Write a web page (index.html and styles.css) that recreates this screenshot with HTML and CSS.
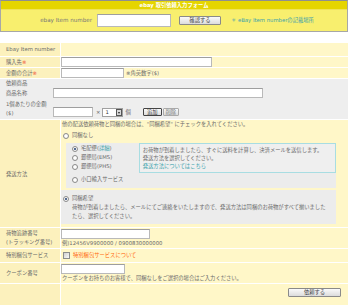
FILE: index.html
```html
<!DOCTYPE html>
<html lang="ja">
<head>
<meta charset="utf-8">
<title>ebay 取引依頼入力フォーム</title>
<link rel="stylesheet" href="styles.css">
</head>
<body>
<div class="page">
  <div class="topbox">
    <div class="title">ebay 取引依頼入力フォーム</div>
    <div class="lookup">
      <span class="lk-label">ebay Item number</span>
      <span class="inp inp-item"></span>
      <span class="btn btn-check">確認する</span>
      <span class="teal lk-link">＊ eBay Item numberの記載場所</span>
    </div>
  </div>

  <div class="form">
    <div class="lab r1">Ebay Item number</div>
    <div class="val r1"></div>

    <div class="lab r2">購入先<span class="req">※</span></div>
    <div class="val r2"><span class="inp inp-buy"></span></div>

    <div class="lab r2">金額の合計<span class="req">※</span></div>
    <div class="val r2"><span class="inp inp-sum"></span><span class="hint-inline">※角英数字($)</span></div>

    <div class="gray-sec">
      <div class="sec-title">依頼商品</div>
      <div class="g-row">
        <div class="g-lab">商品名称</div>
        <span class="inp inp-name"></span>
      </div>
      <div class="g-row g-row2">
        <div class="g-lab g-lab2">1個あたりの金額<br>($)</div>
        <div class="g-ctrl">
          <span class="inp inp-price"></span>
          <span class="times">×</span>
          <span class="select"><span class="sel-val">1</span><span class="sel-arrow"></span></span>
          <span class="unit">個</span>
          <span class="btn btn-add">追加</span>
          <span class="btn btn-del">削除</span>
        </div>
      </div>
    </div>

    <div class="lab r-ship"><span class="ship-label">発送方法</span></div>
    <div class="val-block r-ship">
      <div class="note">他の配送依頼荷物と同梱の場合は、"同梱希望" にチェックを入れてください。</div>
      <div class="opt opt-none"><span class="radio"></span>同梱なし</div>
      <div class="box-a">
        <div class="opts">
          <div class="opt"><span class="radio on"></span>宅配便(<span class="teal">詳細</span>)</div>
          <div class="opt"><span class="radio"></span>郵便局(EMS)</div>
          <div class="opt"><span class="radio"></span>郵便局(PHS)</div>
          <div class="opt opt-small"><span class="radio"></span>小口輸入サービス</div>
        </div>
        <div class="info">
          <div>お荷物が到着しましたら、すぐに送料を計算し、決済メールを送信します。</div>
          <div>発送方法を選択してください。</div>
          <div class="teal">発送方法についてはこちら</div>
        </div>
      </div>
      <div class="box-b">
        <div class="opt"><span class="radio on"></span>同梱希望</div>
        <div class="b-text">荷物が到着しましたら、メールにてご連絡をいたしますので、発送方法は同梱のお荷物がすべて揃いました<br>たら、選択してください。</div>
      </div>
    </div>

    <div class="lab r-track">荷物追跡番号<br>(トラッキング番号)</div>
    <div class="val-block r-track">
      <span class="inp inp-track"></span>
      <div class="hint">例)12456V9900000 / 0900830000000</div>
    </div>

    <div class="lab r-pack">特別梱包サービス</div>
    <div class="val r-pack"><span class="check"></span><span class="orange">特別梱包サービスについて</span></div>

    <div class="lab r-coupon">クーポン番号</div>
    <div class="val-block r-coupon">
      <span class="inp inp-coupon"></span>
      <div class="hint">クーポンをお持ちのお客様で、同梱なしをご選択の場合はご入力ください。</div>
    </div>

    <div class="lab r-last"></div>
    <div class="val r-last submit-cell"><span class="btn btn-submit">依頼する</span></div>
  </div>
</div>
</body>
</html>
```

FILE: styles.css
```css
html, body {
  margin: 0;
  padding: 0;
  background: #ffffff;
}

body {
  font-family: "DejaVu Sans", "Noto Sans CJK JP", sans-serif;
  font-size: 5.3px;
  color: #6a6a6a;
  line-height: 1.3;
}

.page {
  width: 348px;
}

/* ---------- top lookup box ---------- */
.topbox {
  border: 1px solid #a7a7a7;
  border-top-color: #8f8f8f;
}

.title {
  height: 8px;
  line-height: 8px;
  background: #e5d500;
  color: #ffffff;
  font-weight: bold;
  text-align: center;
}

.lookup {
  height: 21px;
  background: #f8ef6e;
  display: flex;
  align-items: center;
  border-top: 1px solid #efe35a;
}

.lk-label {
  width: 91px;
  text-align: right;
  font-size: 5.6px;
  color: #777;
}

.inp {
  display: inline-block;
  box-sizing: border-box;
  background: #ffffff;
  border: 1px solid #b9b9b9;
  border-top-color: #9e9e9e;
  vertical-align: middle;
}

.inp-item {
  width: 74px;
  height: 13px;
  margin-left: 5px;
}

.btn {
  display: inline-flex;
  align-items: center;
  justify-content: center;
  box-sizing: border-box;
  border: 1px solid #8a8a8a;
  border-radius: 1px;
  background: linear-gradient(#fafafa, #dcdcdc);
  color: #444;
  font-size: 5.3px;
}

.btn-check {
  width: 42px;
  height: 9px;
  margin-left: 8px;
}

.teal {
  color: #3aa2ac;
}

.lk-link {
  margin-left: 10px;
}

/* ---------- main form ---------- */
.form {
  margin-top: 11px;
  display: grid;
  grid-template-columns: 60px 1fr;
  gap: 1px;
  background: #ffffff;
}

.lab {
  background: #fcf1bd;
  padding-left: 6px;
  display: flex;
  align-items: center;
}

.val {
  background: #fff7c8;
  display: flex;
  align-items: center;
}

.val-block {
  background: #fff7c8;
}

.req {
  color: #f05a3c;
}

.r1 { height: 13px; }
.r2 { height: 10px; }

.inp-buy {
  width: 151px;
  height: 10px;
}

.inp-sum {
  width: 63px;
  height: 10px;
}

.hint-inline {
  margin-left: 2px;
}

/* gray product section */
.gray-sec {
  grid-column: 1 / -1;
  background: #eeeeee;
  height: 40px;
  padding-left: 6px;
}

.sec-title {
  height: 9px;
  line-height: 9px;
  padding-top: 0;
}

.g-row {
  display: flex;
  align-items: center;
}

.g-lab {
  width: 47px;
}

.inp-name {
  width: 210px;
  height: 10px;
}

.g-row2 {
  margin-top: 2px;
  align-items: flex-start;
}

.g-lab2 {
  line-height: 9px;
}

.g-ctrl {
  display: flex;
  align-items: center;
  margin-top: 7px;
}

.inp-price {
  width: 40px;
  height: 10px;
}

.times {
  margin-left: 3px;
}

.select {
  display: inline-flex;
  align-items: center;
  box-sizing: border-box;
  width: 21px;
  height: 9px;
  margin-left: 2px;
  background: #fff;
  border: 1px solid #a0a0a0;
}

.sel-val {
  flex: 1;
  padding-left: 2px;
  color: #333;
}

.sel-arrow {
  width: 6px;
  height: 7px;
  box-sizing: border-box;
  background: #d8d8d8;
  border: 1px solid #555;
  position: relative;
}

.sel-arrow::after {
  content: "";
  position: absolute;
  left: 1px;
  top: 2px;
  border-left: 1.5px solid transparent;
  border-right: 1.5px solid transparent;
  border-top: 2px solid #222;
}

.unit {
  margin-left: 2px;
}

.btn-add {
  width: 19px;
  height: 8px;
  margin-left: 12px;
  border-color: #444;
}

.btn-del {
  width: 16px;
  height: 8px;
  margin-left: 1px;
  border-color: #aaa;
  color: #777;
}

/* shipping */
.r-ship { height: 107px; }

.ship-label {
  margin-top: 2px;
}

.note {
  padding: 1px 0 0 1px;
  height: 8px;
}

.opt {
  display: flex;
  align-items: center;
  height: 9px;
}

.radio {
  display: inline-block;
  box-sizing: border-box;
  width: 6px;
  height: 6px;
  border-radius: 50%;
  border: 1px solid #8c8c8c;
  background: radial-gradient(circle, #ffffff 40%, #e4e4e4);
  margin-right: 3px;
  position: relative;
}

.radio.on::after {
  content: "";
  position: absolute;
  left: 1px;
  top: 1px;
  width: 2px;
  height: 2px;
  border-radius: 50%;
  background: #1e3c6e;
}

.opt-none {
  margin-top: 2px;
  padding-left: 2px;
}

.box-a {
  margin: 3px 0 0 5px;
  width: 270px;
  height: 45px;
  background: #ececec;
  display: flex;
}

.opts {
  width: 67px;
  padding: 1px 0 0 6px;
}

.opt-small {
  margin-top: 4px;
}

.info {
  box-sizing: border-box;
  width: 198px;
  height: 30px;
  border: 1px solid #a8dde2;
  padding: 2px 0 0 3px;
  line-height: 8px;
  background: #efefef;
}

.box-b {
  margin-top: 2px;
  width: 275px;
  height: 34px;
  background: #ececec;
  padding-left: 2px;
  box-sizing: border-box;
  padding-top: 4px;
}

.b-text {
  padding-left: 9px;
  line-height: 9px;
}

/* tracking */
.r-track { height: 20px; }

.lab.r-track {
  line-height: 9px;
}

.inp-track {
  width: 89px;
  height: 10px;
  margin-top: 1px;
}

.hint {
  padding-left: 1px;
  line-height: 8px;
}

.r-pack { height: 13px; }

.check {
  display: inline-block;
  box-sizing: border-box;
  width: 7px;
  height: 7px;
  margin: 0 3px 0 2px;
  border: 1px solid #8c8c8c;
  background: linear-gradient(135deg, #d0d0d0, #f8f8f8);
}

.orange {
  color: #ff6a10;
}

.r-coupon { height: 20px; }

.inp-coupon {
  width: 64px;
  height: 10px;
  margin-top: 1px;
}

.r-last { height: 22px; }

.submit-cell {
  justify-content: flex-end;
  align-items: flex-start;
}

.btn-submit {
  width: 53px;
  height: 9px;
  margin: 4px 7px 0 0;
}
```
